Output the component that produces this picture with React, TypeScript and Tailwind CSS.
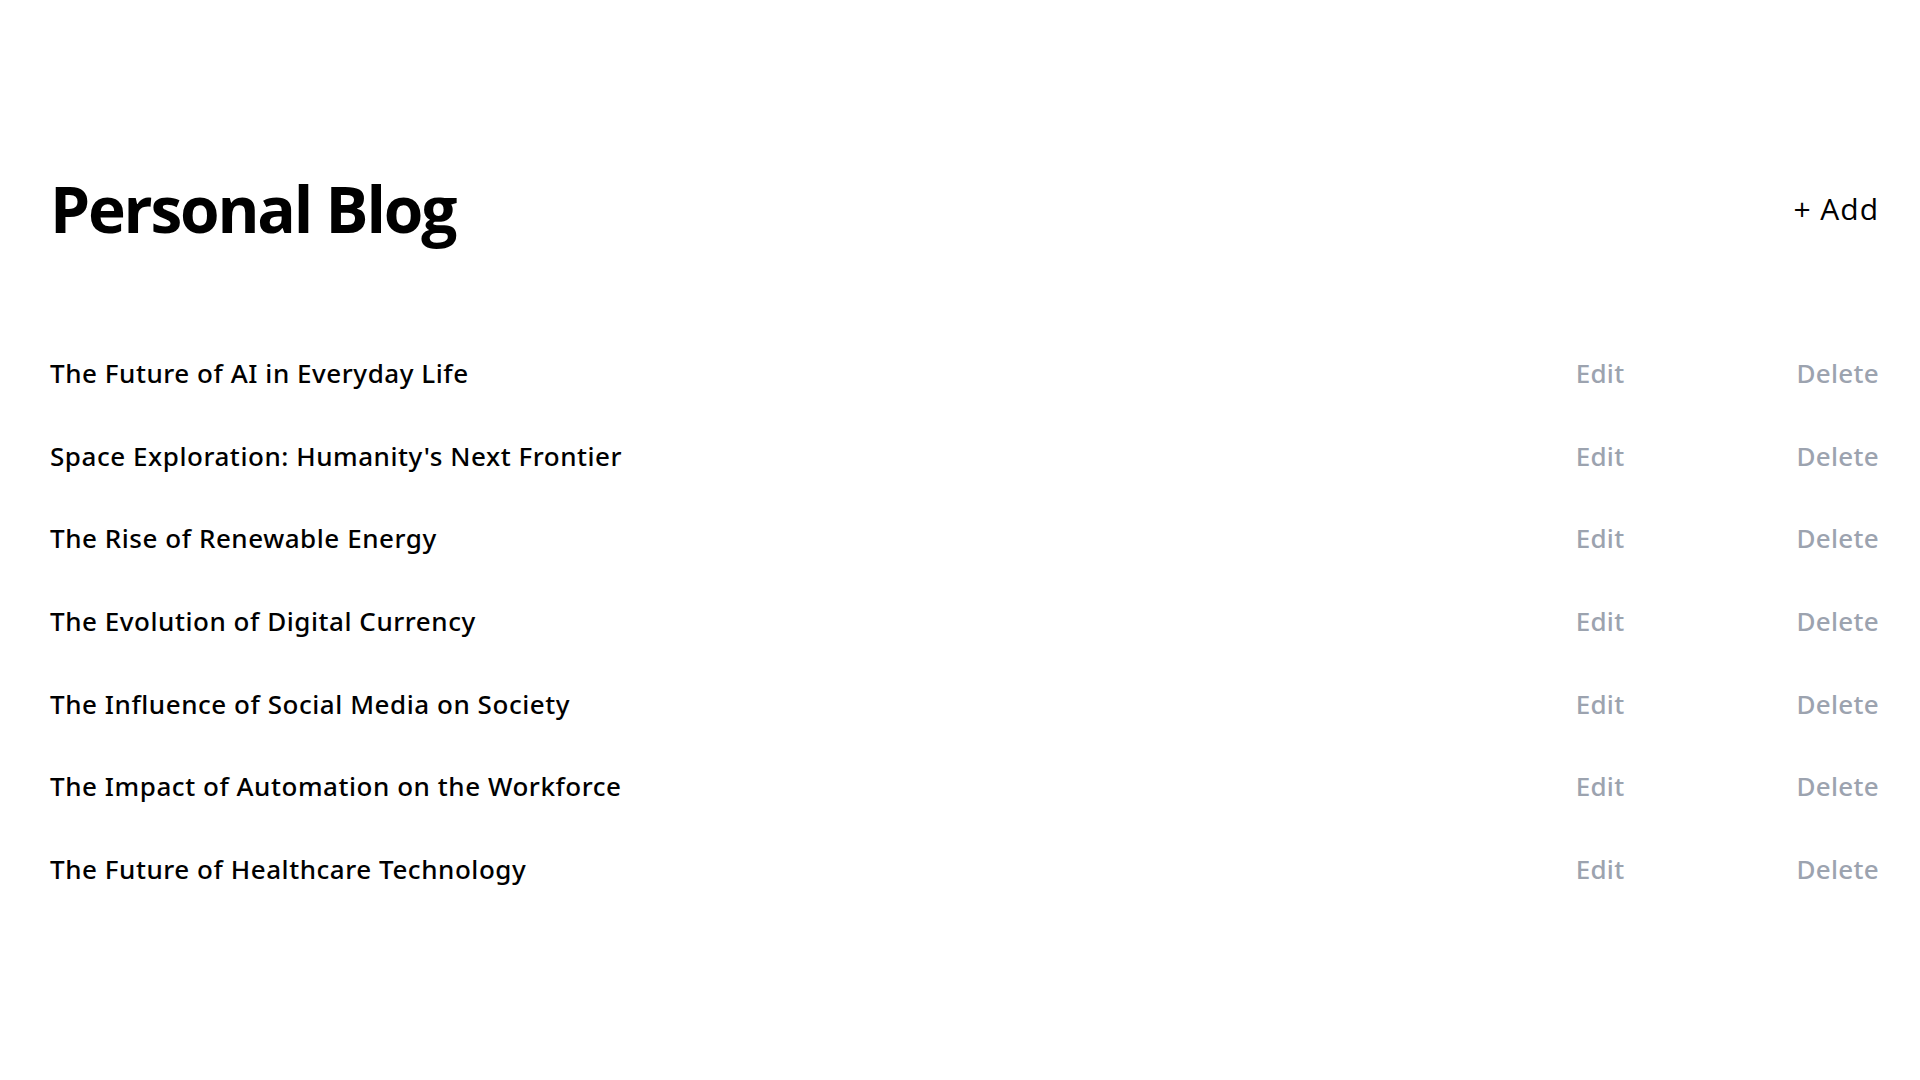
import React from "react";

const posts = [
  "The Future of AI in Everyday Life",
  "Space Exploration: Humanity's Next Frontier",
  "The Rise of Renewable Energy",
  "The Evolution of Digital Currency",
  "The Influence of Social Media on Society",
  "The Impact of Automation on the Workforce",
  "The Future of Healthcare Technology",
];

export default function App() {
  return (
    <div
      className="min-h-screen w-full bg-white text-black"
      style={{ fontFamily: '"Open Sans", "Noto Sans", sans-serif' }}
    >
      <div className="pl-[50px] pr-[41px] pt-[176px]">
        <header className="flex h-[66px] items-center justify-between">
          <h1 className="text-[64px] font-bold leading-none tracking-[-2.2px]">Personal Blog</h1>
          <button className="text-[30px] leading-none tracking-[1px]">+&nbsp;Add</button>
        </header>
        <ul className="mt-[90px]" style={{ fontFamily: '"Noto Sans", "Open Sans", sans-serif' }}>
          {posts.map((p) => (
            <li key={p} className="flex h-[82.6px] items-center">
              <span className="flex-1 text-[26px] font-medium leading-none tracking-[0.55px]">{p}</span>
              <button className="text-[26px] font-medium leading-none tracking-[0.3px] text-[#9ca3af]">Edit</button>
              <button className="ml-[172px] text-[26px] font-medium leading-none tracking-[0.3px] text-[#9ca3af]">Delete</button>
            </li>
          ))}
        </ul>
      </div>
    </div>
  );
}
